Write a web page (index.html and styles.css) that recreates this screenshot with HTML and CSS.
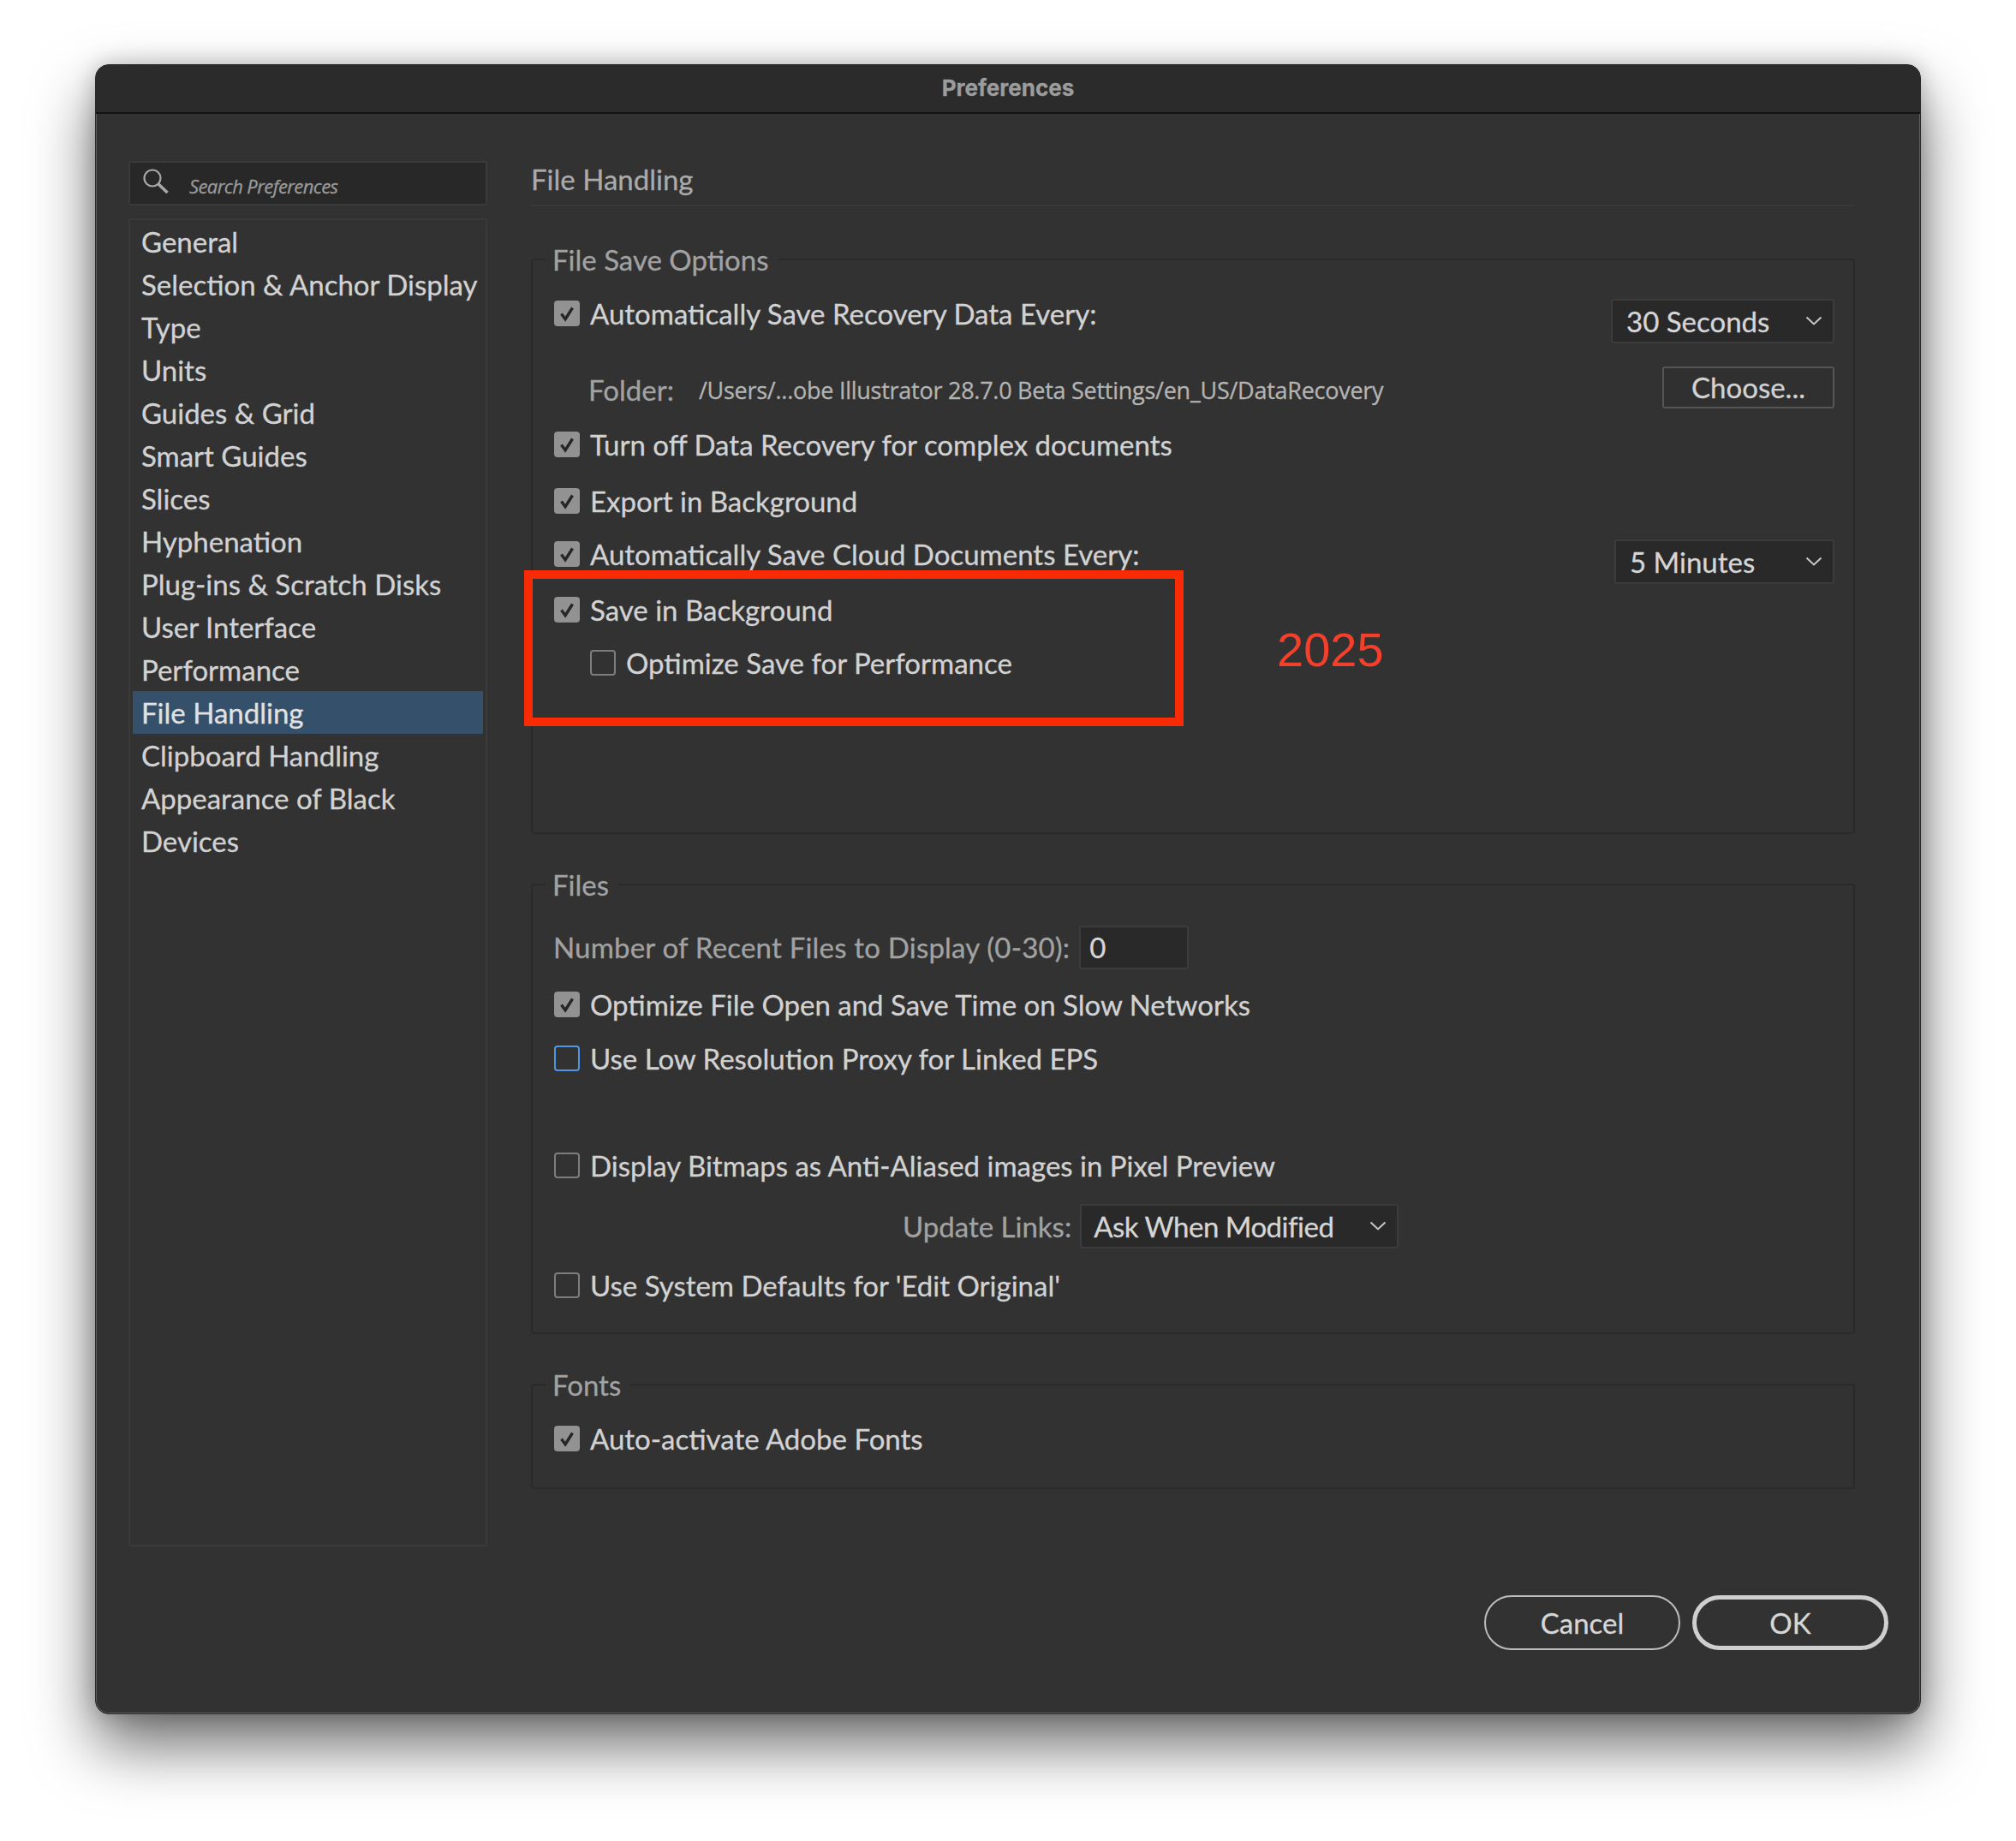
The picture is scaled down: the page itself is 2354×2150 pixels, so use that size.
FILE: index.html
```html
<!DOCTYPE html>
<html lang="en">
<head>
<meta charset="utf-8">
<title>Preferences</title>
<link rel="stylesheet" href="styles.css">
</head>
<body>
<svg class="defs" width="0" height="0" aria-hidden="true">
  <symbol id="tick" viewBox="0 0 30 30"><path d="M8.500 15.500l4.600 6.200L21.500 8.500" fill="none" stroke="#262626" stroke-width="3.400"/></symbol>
  <symbol id="chev" viewBox="0 0 20 12"><path d="M1.500 1.500L10 9.500l8.500-8" fill="none" stroke="#c8c8c8" stroke-width="2"/></symbol>
</svg>
<div class="window">
  <header class="titlebar">Preferences</header>
  <div class="body">
    <aside class="sidebar">
      <div class="search">
        <svg class="search-icon" viewBox="0 0 32 32"><circle cx="12" cy="12" r="9.500" fill="none" stroke="#a8a8a8" stroke-width="2.200"/><path d="M19 19l10.500 10" fill="none" stroke="#a8a8a8" stroke-width="3.600"/></svg>
        <span>Search Preferences</span>
      </div>
      <ul class="nav">
        <li>General</li>
        <li>Selection &amp; Anchor Display</li>
        <li>Type</li>
        <li>Units</li>
        <li>Guides &amp; Grid</li>
        <li>Smart Guides</li>
        <li>Slices</li>
        <li>Hyphenation</li>
        <li>Plug-ins &amp; Scratch Disks</li>
        <li>User Interface</li>
        <li>Performance</li>
        <li class="active">File Handling</li>
        <li>Clipboard Handling</li>
        <li>Appearance of Black</li>
        <li>Devices</li>
      </ul>
    </aside>
    <main class="main">
      <h1 class="heading">File Handling</h1>

      <fieldset class="group group-save">
        <legend>File Save Options</legend>
        <div class="row">
          <span class="check on"><svg><use href="#tick"/></svg></span><label>Automatically Save Recovery Data Every:</label>
          <span class="select sel-sec"><b>30 Seconds</b><svg><use href="#chev"/></svg></span>
        </div>
        <div class="row folder">
          <span class="dim">Folder:</span><span class="path">/Users/...obe Illustrator 28.7.0 Beta Settings/en_US/DataRecovery</span>
          <button class="choose">Choose...</button>
        </div>
        <div class="row m14"><span class="check on"><svg><use href="#tick"/></svg></span><label>Turn off Data Recovery for complex documents</label></div>
        <div class="row m16"><span class="check on"><svg><use href="#tick"/></svg></span><label>Export in Background</label></div>
        <div class="row m12">
          <span class="check on"><svg><use href="#tick"/></svg></span><label>Automatically Save Cloud Documents Every:</label>
          <span class="select sel-min"><b>5 Minutes</b><svg><use href="#chev"/></svg></span>
        </div>
        <div class="row m15"><span class="check on"><svg><use href="#tick"/></svg></span><label>Save in Background</label></div>
        <div class="row m12 indent"><span class="check"></span><label>Optimize Save for Performance</label></div>
        <div class="callout"></div>
        <div class="year">2025</div>
      </fieldset>

      <fieldset class="group group-files">
        <legend>Files</legend>
        <div class="row recent">
          <span class="dim">Number of Recent Files to Display (0-30):</span>
          <span class="input">0</span>
        </div>
        <div class="row m17"><span class="check on"><svg><use href="#tick"/></svg></span><label>Optimize File Open and Save Time on Slow Networks</label></div>
        <div class="row m13"><span class="check focus"></span><label>Use Low Resolution Proxy for Linked EPS</label></div>
        <div class="row m75"><span class="check"></span><label>Display Bitmaps as Anti-Aliased images in Pixel Preview</label></div>
        <div class="row m21 links">
          <span class="dim">Update Links:</span>
          <span class="select sel-links"><b>Ask When Modified</b><svg><use href="#chev"/></svg></span>
        </div>
        <div class="row m19"><span class="check"></span><label>Use System Defaults for 'Edit Original'</label></div>
      </fieldset>

      <fieldset class="group group-fonts">
        <legend>Fonts</legend>
        <div class="row"><span class="check on"><svg><use href="#tick"/></svg></span><label>Auto-activate Adobe Fonts</label></div>
      </fieldset>
    </main>
  </div>
  <footer class="footer">
    <button class="pill">Cancel</button>
    <button class="pill primary">OK</button>
  </footer>
</div>
</body>
</html>
```
FILE: styles.css
```css
* { box-sizing: border-box; }
html, body { margin: 0; padding: 0; background: #fff; }
body { width: 2354px; height: 2150px; padding: 75px 111px 0; font-family: Lato, "Noto Sans", sans-serif; font-size: 33px; color: #d2d2d2; overflow: hidden; -webkit-text-stroke: .3px; }
.defs { position: absolute; }

.window {
  width: 2132px; height: 1927px; display: flex; flex-direction: column;
  background: #323232; border-radius: 16px; border: 1px solid #2a2a2a;
  box-shadow: inset 0 0 0 1px #5e5e5e, 0 36px 72px rgba(0,0,0,.58), 0 0 26px rgba(0,0,0,.22);
  overflow: visible;
}
.titlebar {
  height: 57px; flex: none; display: flex; align-items: center; justify-content: center; padding-bottom: 2px;
  background: #2b2b2b; border-bottom: 2px solid #141414; border-radius: 15px 15px 0 0;
  font: 700 26px Inter, sans-serif; color: #9c9c9c;
}
.body { height: 1673px; flex: none; display: flex; gap: 51px; padding: 55px 76px 0 38px; }

.sidebar { width: 419px; flex: none; display: flex; flex-direction: column; gap: 15px; }
.search {
  height: 52px; flex: none; display: flex; align-items: center; padding: 0 0 0 14px;
  background: #282828; border: 2px solid #3a3a3a; border-radius: 3px;
  font: italic 400 22px "Open Sans", sans-serif; letter-spacing: -.6px; color: #9a9a9a;
}
.search-icon { width: 32px; height: 32px; margin: -4px 23px 0 0; flex: none; }
.search span { position: relative; top: 3px; }
.nav { flex: 1; margin: 0; padding: 0 3px; list-style: none; border: 2px solid #3a3a3a; border-radius: 3px; }
.nav li { height: 50px; line-height: 50px; padding-left: 10px; white-space: nowrap; }
.nav .active { background: #35506b; color: #e2e2e2; }

.main { flex: 1; min-width: 0; padding-top: 1px; }
.heading { margin: 0 0 44px; height: 52px; line-height: 40px; font-size: 33px; font-weight: 400; color: #ababab; border-bottom: 2px solid #393939; }

.group { position: relative; margin: 0 0 41px; padding: 20px 22px 0 25px; border: 2px solid #2a2a2a; border-radius: 4px; min-width: 0; }
.group legend { margin-left: -10px; padding: 0 11px 0 8px; height: 36px; line-height: 36px; color: #a2a2a2; }
.group-save { padding-bottom: 173px; }
.group-files { padding-top: 30px; padding-bottom: 30px; }
.group-fonts { padding-bottom: 32px; }

.row { height: 50px; display: flex; align-items: center; white-space: nowrap; }
.row label { margin-left: 12px; }
.m12 { margin-top: 12px; } .m13 { margin-top: 13px; } .m14 { margin-top: 14px; }
.m15 { margin-top: 15px; } .m16 { margin-top: 16px; } .m17 { margin-top: 17px; }
.m19 { margin-top: 19px; } .m21 { margin-top: 21px; } .m75 { margin-top: 75px; }
.indent { padding-left: 42px; }
.folder { margin-top: 39px; padding-left: 40px; }
.recent { margin-left: -1px; }
.recent .dim { letter-spacing: .2px; }
.dim { color: #a2a2a2; }
.path { margin-left: 29px; font: 400 27px "Open Sans", sans-serif; color: #b4b4b4; letter-spacing: -.26px; }

.check { width: 30px; height: 30px; flex: none; border: 2px solid #7d7d7d; border-radius: 4px; }
.check.on { background: #929292; border: 0; }
.check.on svg { display: block; width: 30px; height: 30px; }
.check.focus { border-color: #4d97e6; }

.select {
  height: 52px; display: flex; align-items: center; justify-content: space-between;
  background: #292929; border: 2px solid #3c3c3c; border-radius: 3px; padding: 0 12px 0 16px;
}
.select b { font-weight: 400; color: #d6d6d6; }
.select svg { width: 20px; height: 12px; }
.sel-sec { width: 261px; margin: 18px 0 0 auto; }
.sel-min { width: 257px; margin: 18px 0 0 auto; }
.links .dim { margin-left: 407px; }
.sel-links { width: 372px; margin-left: 10px; padding-left: 14px; }
.sel-links b { letter-spacing: -.5px; }
.choose {
  width: 201px; height: 49px; margin: -6px 0 0 auto; font: inherit; color: #d2d2d2; -webkit-text-stroke: .3px;
  background: #303030; border: 2px solid #555; border-radius: 3px; padding: 0;
}
.input { width: 128px; height: 51px; margin-left: 11px; display: flex; align-items: center; padding-left: 10px; background: #292929; border: 2px solid #3c3c3c; border-radius: 3px; color: #d6d6d6; }

.callout { position: absolute; left: -10px; top: 345px; width: 770px; height: 182px; border: 10px solid #f92b05; }
.year { position: absolute; left: 869px; top: 405px; font: 400 56px "Liberation Sans", sans-serif; color: #f43f2b; -webkit-text-stroke: 0; }

.footer { flex: 1; display: flex; justify-content: flex-end; align-items: flex-start; gap: 14px; padding: 57px 37px 0 0; }
.pill {
  width: 229px; height: 64px; font: inherit; color: #d6d6d6; -webkit-text-stroke: .3px; background: transparent; padding: 0;
  border: 2px solid #bdbdbd; border-radius: 32px;
}
.pill.primary { border: 5px solid #cfcfcf; }
```
